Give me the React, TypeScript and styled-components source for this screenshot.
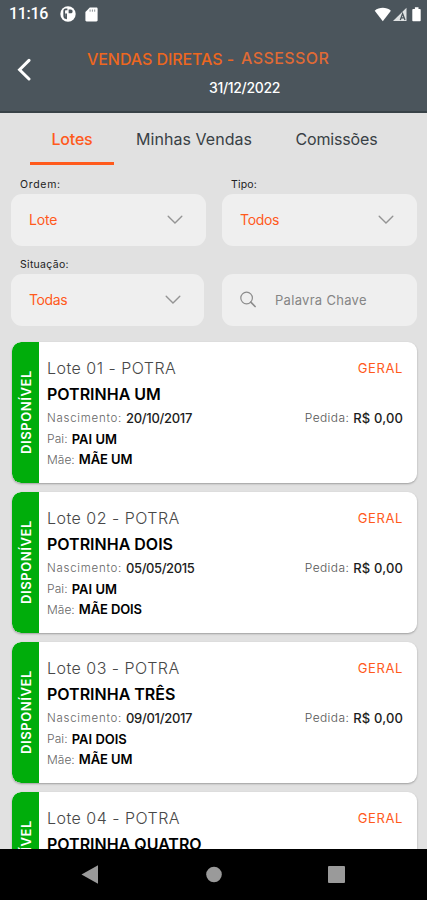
import React from 'react';
import styled, { createGlobalStyle } from 'styled-components';

const GlobalStyle = createGlobalStyle`
  * { box-sizing: border-box; }
  body { margin: 0; background: #000; }
`;

const ORANGE = '#ff5a1c';

const Screen = styled.div`
  width: 427px;
  height: 900px;
  display: flex;
  flex-direction: column;
  overflow: hidden;
  background: #e1e1e1;
  font-family: Inter, Montserrat, sans-serif;
`;

const Text = styled.span<{ $size: number; $weight?: number; $color?: string; $track?: number }>`
  font-size: ${(p) => p.$size}px;
  font-weight: ${(p) => p.$weight ?? 400};
  color: ${(p) => p.$color ?? '#000'};
  letter-spacing: ${(p) => p.$track ?? 0}px;
  white-space: nowrap;
`;

const Header = styled.header`
  flex: none;
  height: 113px;
  background: #4b555c;
  border-bottom: 2px solid #384247;
`;

const StatusBar = styled.div`
  display: flex;
  align-items: center;
  height: 28px;
  padding: 0 5px 0 9px;
`;

const Clock = styled.span`
  font: 500 16px/28px Roboto, sans-serif;
  letter-spacing: -0.3px;
  color: #fff;
  width: 51px;
`;

const StatusIcons = styled.div`
  display: flex;
  align-items: center;
  gap: 9px;
`;

const SignalIcons = styled.div`
  display: flex;
  align-items: center;
  margin-left: auto;
`;

const TitleBar = styled.div`
  display: flex;
  height: 83px;
`;

const BackButton = styled.button`
  width: 60px;
  padding: 1px 0 0 16px;
  border: 0;
  background: none;
  text-align: left;
`;

const TitleBlock = styled.div`
  flex: 1;
  padding: 19px 0 0 27px;
`;

const TitleLine = styled.div`
  display: flex;
  line-height: 22px;
  gap: 7px;

  & > :first-child { padding-top: 1px; }
`;

const DateLine = styled.div`
  padding: 7px 0 0 122px;
  line-height: 20px;
`;

const Tabs = styled.nav`
  flex: none;
  display: flex;
  height: 52px;
  padding-left: 30px;
`;

const Tab = styled.div<{ $active?: boolean; $width: number }>`
  width: ${(p) => p.$width}px;
  height: 52px;
  display: flex;
  justify-content: center;
  line-height: 52px;
  border-bottom: 3px solid ${(p) => (p.$active ? ORANGE : 'transparent')};
`;

const Filters = styled.section`
  flex: none;
  display: grid;
  grid-template-columns: 195px 195px;
  column-gap: 16px;
  padding: 9px 0 0 11px;
`;

const Field = styled.div`
  height: 80px;
`;

const Label = styled.div`
  height: 20px;
  padding-left: 9px;
  line-height: 17px;
`;

const SelectBox = styled.div<{ $narrow?: boolean }>`
  display: flex;
  align-items: center;
  justify-content: space-between;
  width: ${(p) => (p.$narrow ? 193 : 195)}px;
  height: 52px;
  padding: 0 23px 1px 18px;
  border-radius: 11px;
  background: #efefef;
`;

const SearchBox = styled(SelectBox)`
  justify-content: flex-start;
  gap: 18px;
`;

const List = styled.main`
  flex: 1;
  min-height: 0;
  overflow: hidden;
  display: flex;
  flex-direction: column;
  gap: 9px;
  padding: 7.5px 10px 0 11.5px;
`;

const Card = styled.article`
  flex: none;
  display: flex;
  height: 141px;
  border-radius: 9px;
  background: #fff;
  overflow: hidden;
  box-shadow: 0 1px 2px rgba(0, 0, 0, 0.3);
`;

const StatusStripe = styled.div`
  flex: none;
  width: 27px;
  display: flex;
  align-items: center;
  justify-content: center;
  background: #00ad0b;
  writing-mode: vertical-rl;
  transform: rotate(180deg);
  border-radius: 0 9px 9px 0;
`;

const CardBody = styled.div`
  flex: 1;
  padding: 13px 14px 0 8.5px;
`;

const CardRow = styled.div<{ $height: number }>`
  display: flex;
  justify-content: space-between;
  height: ${(p) => p.$height}px;
  line-height: ${(p) => p.$height}px;
`;

const Pair = styled.div`
  display: flex;
  gap: 4px;
`;

const NavBar = styled.footer`
  flex: none;
  display: flex;
  align-items: center;
  justify-content: space-between;
  height: 51px;
  padding: 0 82px 0 81px;
  background: #000;
`;

const Chevron = () => (
  <svg width="16" height="10" viewBox="0 0 16 10" fill="none" stroke="#949494" strokeWidth="1.4" strokeLinecap="round">
    <path d="M1.2 1.3 8 8 14.8 1.3" />
  </svg>
);

const ParkingIcon = () => (
  <svg width="16" height="16" viewBox="0 0 16 16">
    <circle cx="8" cy="8" r="7.7" fill="#fff" />
    <path d="M7.4 3.3H5.6c-1.3 0-1.4.8-1.4 1.8v5.2c0 1 .4 1.7 1.9 1.9V7.4" fill="none" stroke="#4b555c" strokeWidth="1.7" />
    <path d="M8.6 3.6h2.1c1.3 0 1.9.8 1.9 1.9s-.7 1.8-1.9 1.8H8.6Z" fill="#4b555c" />
  </svg>
);

const SdCardIcon = () => (
  <svg width="13" height="15" viewBox="0 0 13 15">
    <path d="M4.8.6h6.6c.7 0 1.2.5 1.2 1.2v11.4c0 .7-.5 1.2-1.2 1.2H1.6c-.7 0-1.2-.5-1.2-1.2V5Z" fill="#fff" />
    <path d="M5.1 2.5v2.2M7.4 2.5v2.2M9.7 2.5v2.2" stroke="#7b8388" strokeWidth=".9" />
  </svg>
);

const WifiIcon = () => (
  <svg width="18" height="15" viewBox="0 0 18 15">
    <path d="M.7 3.7C5.3-.1 12.3-.1 16.9 3.7L8.8 14.2Z" fill="#fff" />
  </svg>
);

const CellIcon = () => (
  <svg width="16" height="15" viewBox="0 0 16 15">
    <path d="M1 14 14.5.8V14Z" fill="#dfe2e3" />
    <path d="M8.3 13 10.6 6.6 13 13M9.2 10.9h3" stroke="#4b555c" strokeWidth="1.3" fill="none" />
  </svg>
);

const BatteryIcon = () => (
  <svg width="14" height="15" viewBox="0 0 14 15">
    <path d="M6.9.3h3.6v1.6h1.4c.5 0 .8.3.8.8v10.8c0 .5-.3.8-.8.8H5.1c-.5 0-.8-.3-.8-.8V2.7c0-.5.3-.8.8-.8h1.8Z" fill="#fff" />
  </svg>
);

interface Lot {
  lot: string;
  name: string;
  details?: { birth: string; birthTrack: number; sire: string; dam: string };
}

const lots: Lot[] = [
  { lot: '01', name: 'POTRINHA UM', details: { birth: '20/10/2017', birthTrack: -0.3, sire: 'PAI UM', dam: 'MÃE UM' } },
  { lot: '02', name: 'POTRINHA DOIS', details: { birth: '05/05/2015', birthTrack: -0.4, sire: 'PAI UM', dam: 'MÃE DOIS' } },
  { lot: '03', name: 'POTRINHA TRÊS', details: { birth: '09/01/2017', birthTrack: -0.3, sire: 'PAI DOIS', dam: 'MÃE UM' } },
  { lot: '04', name: 'POTRINHA QUATRO' },
];

const LotCard = ({ lot, name, details }: Lot) => (
  <Card>
    <StatusStripe>
      <Text $size={13} $weight={600} $color="#fff" $track={0.6}>DISPONÍVEL</Text>
    </StatusStripe>
    <CardBody>
      <CardRow $height={26}>
        <Text $size={16} $weight={300} $color="#484848" $track={0.48}>Lote {lot} - POTRA</Text>
        <Text $size={13} $color={ORANGE} $track={0.6}>GERAL</Text>
      </CardRow>
      <CardRow $height={26}>
        <Text $size={16} $weight={600}>{name}</Text>
      </CardRow>
      {details && (
        <>
          <CardRow $height={22}>
            <Pair>
              <Text $size={11.5} $weight={300} $color="#666" $track={0.73}>Nascimento:</Text>
              <Text $size={13} $weight={500} $color="#1c1c1c" $track={details.birthTrack}>{details.birth}</Text>
            </Pair>
            <Pair>
              <Text $size={12} $weight={300} $color="#555" $track={0.4}>Pedida:</Text>
              <Text $size={13} $weight={500} $color="#1c1c1c" $track={0.15}>R$ 0,00</Text>
            </Pair>
          </CardRow>
          <CardRow $height={20}>
            <Pair>
              <Text $size={12} $weight={300} $color="#666" $track={0.1}>Pai:</Text>
              <Text $size={13} $weight={600}>{details.sire}</Text>
            </Pair>
          </CardRow>
          <CardRow $height={21}>
            <Pair>
              <Text $size={12} $weight={300} $color="#666">Mãe:</Text>
              <Text $size={13} $weight={600} $track={-0.1}>{details.dam}</Text>
            </Pair>
          </CardRow>
        </>
      )}
    </CardBody>
  </Card>
);

export default function App() {
  return (
    <>
      <GlobalStyle />
      <Screen>
        <Header>
          <StatusBar>
            <Clock>11:16</Clock>
            <StatusIcons>
              <ParkingIcon />
              <SdCardIcon />
            </StatusIcons>
            <SignalIcons>
              <WifiIcon />
              <CellIcon />
              <BatteryIcon />
            </SignalIcons>
          </StatusBar>
          <TitleBar>
            <BackButton aria-label="Voltar">
              <svg width="16" height="24" viewBox="0 0 16 24" fill="none" stroke="#fff" strokeWidth="3" strokeLinecap="round">
                <path d="M13 3.4 3.6 12.7 13 22" />
              </svg>
            </BackButton>
            <TitleBlock>
              <TitleLine>
                <Text $size={16} $weight={500} $color="#ed671f" $track={-0.07}>VENDAS DIRETAS -</Text>
                <Text $size={16} $weight={500} $color="#df6a35" $track={0.4}>ASSESSOR</Text>
              </TitleLine>
              <DateLine>
                <Text $size={14} $weight={500} $color="#fff" $track={-0.33}>31/12/2022</Text>
              </DateLine>
            </TitleBlock>
          </TitleBar>
        </Header>
        <Tabs>
          <Tab $active $width={84}><Text $size={16} $weight={500} $color={ORANGE} $track={-0.2}>Lotes</Text></Tab>
          <Tab $width={160}><Text $size={16} $color="#384045" $track={0.05}>Minhas Vendas</Text></Tab>
          <Tab $width={125}><Text $size={16} $color="#384045" $track={-0.16}>Comissões</Text></Tab>
        </Tabs>
        <Filters>
          <Field>
            <Label><Text $size={10.5} $color="#222" $track={0.7}>Ordem:</Text></Label>
            <SelectBox><Text $size={14} $color={ORANGE} $track={-0.2}>Lote</Text><Chevron /></SelectBox>
          </Field>
          <Field>
            <Label><Text $size={10.5} $color="#222" $track={0.2}>Tipo:</Text></Label>
            <SelectBox><Text $size={14} $color={ORANGE} $track={-0.3}>Todos</Text><Chevron /></SelectBox>
          </Field>
          <Field>
            <Label><Text $size={10.5} $color="#222" $track={0.3}>Situação:</Text></Label>
            <SelectBox $narrow><Text $size={14} $color={ORANGE} $track={-0.4}>Todas</Text><Chevron /></SelectBox>
          </Field>
          <Field>
            <Label />
            <SearchBox>
              <svg width="17" height="18" viewBox="0 0 17 18" fill="none" stroke="#8c8c8c" strokeWidth="1.2" strokeLinecap="round">
                <circle cx="6.6" cy="7" r="5.8" />
                <path d="m10.8 11.2 4.3 4.3" strokeWidth="1.7" />
              </svg>
              <Text $size={13} $color="#858585" $track={0.3}>Palavra Chave</Text>
            </SearchBox>
          </Field>
        </Filters>
        <List>
          {lots.map((l) => <LotCard key={l.lot} {...l} />)}
        </List>
        <NavBar>
          <svg width="17" height="20" viewBox="0 0 17 20"><path d="M.5 9.5 17 .3v18.4Z" fill="#9a9a9a" /></svg>
          <svg width="17" height="17" viewBox="0 0 17 17"><circle cx="9" cy="8.5" r="7.8" fill="#9a9a9a" /></svg>
          <svg width="17" height="17" viewBox="0 0 17 17"><rect width="17" height="17" rx="1" fill="#9a9a9a" /></svg>
        </NavBar>
      </Screen>
    </>
  );
}
